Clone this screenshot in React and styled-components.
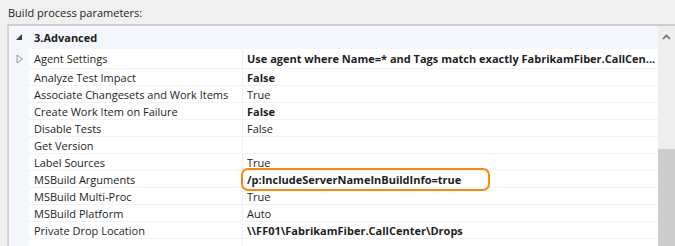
import React from "react";
import styled, { createGlobalStyle } from "styled-components";

const GlobalStyle = createGlobalStyle`
	html, body {
		margin: 0;
		padding: 0;
		background: #f0f0f0;
	}
	body {
		font-family: "Open Sans", "Noto Sans", sans-serif;
		font-size: 11px;
		color: #1e1e1e;
	}
`

const rows = [
	{ name: "Agent Settings", value: "Use agent where Name=* and Tags match exactly FabrikamFiber.CallCen...", bold: true, expandable: true, first: true },
	{ name: "Analyze Test Impact", value: "False", bold: true },
	{ name: "Associate Changesets and Work Items", value: "True" },
	{ name: "Create Work Item on Failure", value: "False", bold: true },
	{ name: "Disable Tests", value: "False" },
	{ name: "Get Version", value: "" },
	{ name: "Label Sources", value: "True" },
	{ name: "MSBuild Arguments", value: "/p:IncludeServerNameInBuildInfo=true", bold: true, highlight: true },
	{ name: "MSBuild Multi-Proc", value: "True" },
	{ name: "MSBuild Platform", value: "Auto" },
	{ name: "Private Drop Location", value: "\\\\FF01\\FabrikamFiber.CallCenter\\Drops", bold: true },
	{ name: "", value: "" },
]

const App = () => {
	return (
		<Page>
			<GlobalStyle />
			<Caption>Build process parameters:</Caption>
			<Panel>
				<Grid>
					<Category>
						<Gutter>
							<svg width="7" height="7" viewBox="0 0 7 7">
								<polygon points="6,0 6,6 0,6" fill="#3c3c3c" />
							</svg>
						</Gutter>
						<CategoryTitle>3.Advanced</CategoryTitle>
					</Category>
					{rows.map((row, index) => (
						<Row key={index} $first={row.first}>
							<Gutter>
								{row.expandable &&
									<svg width="8" height="10" viewBox="0 0 8 10">
										<polygon points="1,1 6.5,5 1,9" fill="none" stroke="#9a9a9a" strokeWidth="1" />
									</svg>
								}
							</Gutter>
							<NameCell>{row.name}</NameCell>
							<ValueCell $bold={row.bold}>
								<ValueText>{row.value}</ValueText>
								{row.highlight && <Highlight />}
							</ValueCell>
						</Row>
					))}
				</Grid>
				<ScrollBar>
					<ScrollArrow>
						<svg width="9" height="6" viewBox="0 0 9 6">
							<polyline points="1,5 4.5,1.5 8,5" fill="none" stroke="#6a6a6a" strokeWidth="1.6" />
						</svg>
					</ScrollArrow>
					<ScrollTrack>
						<ScrollThumb />
					</ScrollTrack>
				</ScrollBar>
			</Panel>
		</Page>
	)
}

const Page = styled.div`
	width: 675px;
	height: 246px;
	overflow: hidden;
	background: #f0f0f0;
`

const Caption = styled.div`
	height: 24px;
	line-height: 26px;
	padding-left: 8px;
	color: #1e1e1e;
`

const Panel = styled.div`
	margin-left: 7px;
	height: 222px;
	display: flex;
	overflow: hidden;
	border-top: 2px solid #cfcfcf;
	border-left: 2px solid #d4d4d4;
	background: #ffffff;
`

const Grid = styled.div`
	flex: 1;
	min-width: 0;
	display: flex;
	flex-direction: column;
	background: #f3f6fb;
`

const Category = styled.div`
	height: 23px;
	flex-shrink: 0;
	display: flex;
	align-items: center;
	background: #f3f6fb;
`

const Gutter = styled.div`
	width: 20px;
	flex-shrink: 0;
	display: flex;
	align-items: center;
	justify-content: center;
	padding-left: 1px;
	box-sizing: border-box;
`

const CategoryTitle = styled.div`
	font-weight: 700;
	padding-left: 5px;
`

const Row = styled.div`
	height: ${p => p.$first ? 20 : 17}px;
	display: flex;
	align-items: stretch;
	flex-shrink: 0;
`

const NameCell = styled.div`
	width: 214px;
	flex-shrink: 0;
	background: #ffffff;
	border-bottom: 1px solid #f2f2f6;
	border-right: 1px solid #f0f0f4;
	padding-left: 5px;
	display: flex;
	align-items: center;
	box-sizing: border-box;
	white-space: nowrap;
`

const ValueCell = styled.div`
	position: relative;
	flex: 1;
	min-width: 0;
	background: #ffffff;
	border-bottom: 1px solid #f2f2f6;
	padding-left: 4px;
	display: flex;
	align-items: center;
	box-sizing: border-box;
	font-weight: ${p => p.$bold ? 700 : 400};
`

const ValueText = styled.span`
	white-space: nowrap;
`

const Highlight = styled.div`
	position: absolute;
	z-index: 1;
	left: -2px;
	top: -3px;
	width: 249px;
	height: 23px;
	border: 2.5px solid #f7890f;
	border-radius: 7px;
	box-sizing: border-box;
	pointer-events: none;
`

const ScrollBar = styled.div`
	width: 17px;
	flex-shrink: 0;
	display: flex;
	flex-direction: column;
	background: #eeeeee;
`

const ScrollArrow = styled.div`
	height: 17px;
	display: flex;
	align-items: center;
	justify-content: center;
	margin-top: 2px;
`

const ScrollTrack = styled.div`
	flex: 1;
	display: flex;
	flex-direction: column;
	padding-top: 104px;
`

const ScrollThumb = styled.div`
	flex: 1;
	background: #cdcdcd;
`

export default App;
